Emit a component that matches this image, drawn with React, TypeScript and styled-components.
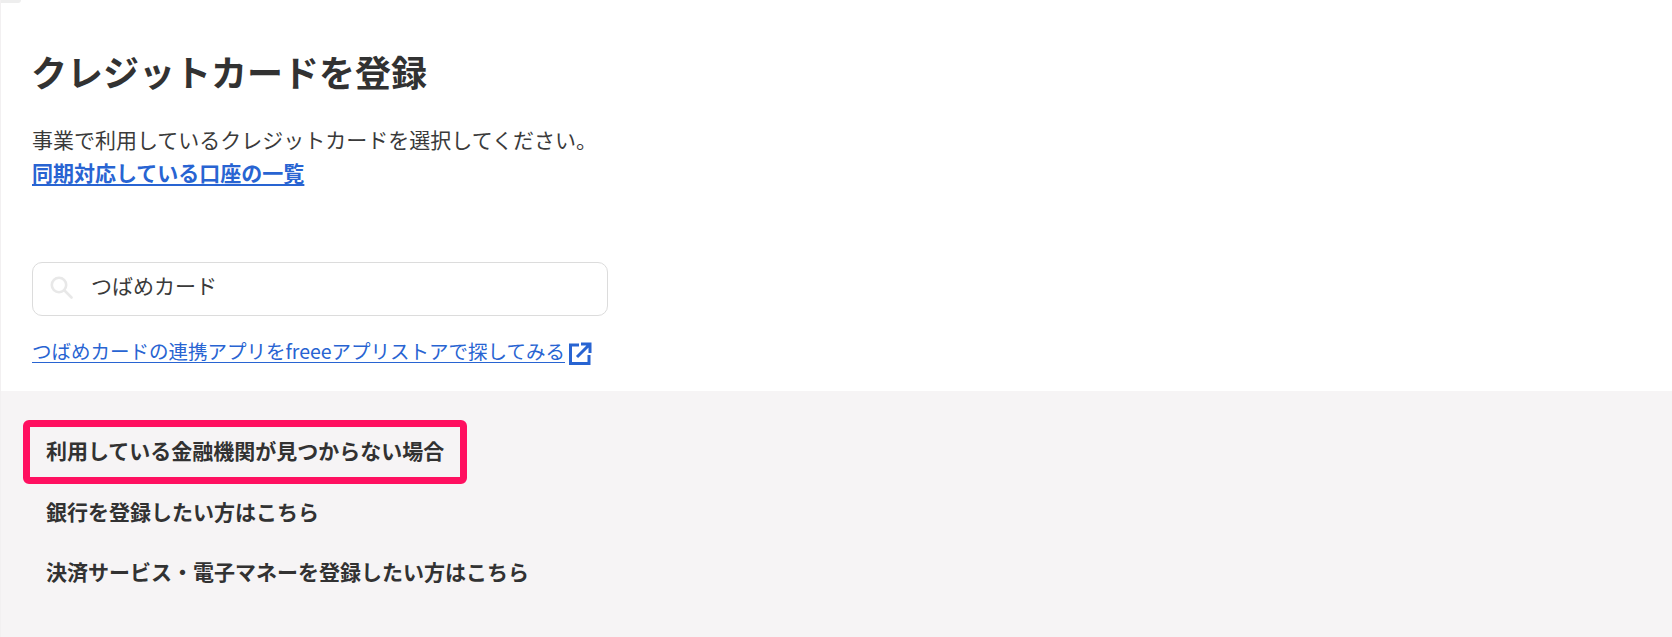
import React from 'react'
import styled, { createGlobalStyle } from 'styled-components'

const GlobalStyle = createGlobalStyle`
  html, body {
    margin: 0;
    padding: 0;
    background: #fff;
    font-family: "Noto Sans CJK JP", "Noto Sans", sans-serif;
    color: #323232;
  }
`

const Page = styled.div`
  position: relative;
  width: 1672px;
  height: 637px;
  display: flex;
  flex-direction: column;
  overflow: hidden;
  border-left: 1px solid #f2f0f1;
  box-sizing: border-box;
`

// leftover corner of the panel behind the page
const CornerShade = styled.div`
  position: absolute;
  top: 0;
  left: 0;
  width: 20px;
  height: 3px;
  background: #eeeeee;
  border-bottom-right-radius: 4px;
`

const Upper = styled.section`
  height: 391px;
  flex: none;
  box-sizing: border-box;
  padding: 46px 0 0 31px;
  display: flex;
  flex-direction: column;
`

const Title = styled.h1`
  margin: 0 0 0 -1px;
  font-size: 36px;
  line-height: 50px;
  font-weight: 700;
`

const Description = styled.p`
  margin: 27px 0 0;
  font-size: 21px;
  line-height: 33px;
  font-weight: 400;
  color: #3a3a3a;
`

const Link = styled.a<{ $bold?: boolean }>`
  color: #2864d2;
  font-size: ${(props) => (props.$bold ? '21px' : '19.5px')};
  line-height: 33px;
  font-weight: ${(props) => (props.$bold ? 700 : 400)};
  text-decoration: underline;
  text-underline-offset: 3px;
  cursor: pointer;
`

const SearchBox = styled.div`
  width: 576px;
  height: 54px;
  margin-top: 73px;
  box-sizing: border-box;
  display: flex;
  align-items: center;
  gap: 18px;
  padding: 0 0 4px 16px;
  border: 1px solid #dcdcdc;
  border-radius: 10px;
  background: #fff;
`

const SearchText = styled.span`
  font-size: 21px;
  line-height: 30px;
  margin-bottom: 4px;
  color: #3a3a3a;
`

const AppStoreRow = styled.div`
  display: flex;
  align-items: center;
  gap: 3px;
  margin-top: 18px;
  height: 33px;
`

const ExternalIcon = styled.svg`
  width: 24px;
  height: 24px;
  flex: none;
  margin-top: 7px;
`

const Lower = styled.section`
  flex: 1;
  background: #f6f4f5;
  display: flex;
  flex-direction: column;
  align-items: flex-start;
  padding: 29px 0 0 22px;
`

const HelpItem = styled.a<{ $highlighted?: boolean }>`
  display: block;
  height: 60px;
  box-sizing: border-box;
  padding: 0 23px;
  font-size: 21px;
  line-height: 57px;
  font-weight: 700;
  color: #323232;
  border-radius: 6px;
  cursor: pointer;
  ${(props) =>
    props.$highlighted
      ? `
    outline: 7px solid #ff1060;
    outline-offset: -7px;
    height: 64px;
    margin-bottom: -1px;
    line-height: 60px;
  `
      : ''}
`

const SearchIcon = () => (
  <svg width="24" height="24" viewBox="0 0 24 24" fill="none" stroke="#e8e8e8" strokeWidth="2.6">
    <circle cx="10" cy="10" r="7.2" />
    <path d="M15.5 15.5 L22.5 22.5" strokeLinecap="round" />
  </svg>
)

export default function App() {
  return (
    <>
      <GlobalStyle />
      <Page>
        <CornerShade />
        <Upper>
          <Title>クレジットカードを登録</Title>
          <Description>事業で利用しているクレジットカードを選択してください。</Description>
          <div>
            <Link $bold>同期対応している口座の一覧</Link>
          </div>
          <SearchBox>
            <SearchIcon />
            <SearchText>つばめカード</SearchText>
          </SearchBox>
          <AppStoreRow>
            <Link>つばめカードの連携アプリをfreeeアプリストアで探してみる</Link>
            <ExternalIcon viewBox="0 0 24 24" fill="none" stroke="#2864d2" strokeWidth="3">
              <path d="M11 3 H2.5 V21.5 H21 V13" />
              <path d="M9 15 L21 3 M13 2 H22 V11" />
            </ExternalIcon>
          </AppStoreRow>
        </Upper>
        <Lower>
          <HelpItem $highlighted>利用している金融機関が見つからない場合</HelpItem>
          <HelpItem>銀行を登録したい方はこちら</HelpItem>
          <HelpItem>決済サービス・電子マネーを登録したい方はこちら</HelpItem>
        </Lower>
      </Page>
    </>
  )
}
